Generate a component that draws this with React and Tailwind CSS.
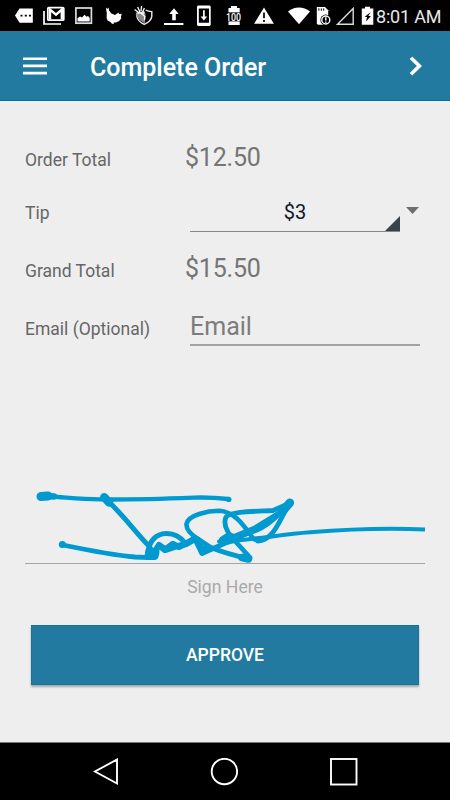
const ROBOTO = "font-['Roboto','Noto_Sans',sans-serif]";

// Every status glyph is drawn in the bar's own coordinate system.
function Slot({ x, w, children }) {
  return (
    <svg width={w} height="31" viewBox={`${x} 0 ${w} 31`} className="block shrink-0" fill="none">
      {children}
    </svg>
  );
}

function StatusBar() {
  return (
    <header className="flex h-[31px] w-full shrink-0 bg-black text-white">
      <Slot x={0} w={38}>
        <path d="M19.5 8.5H32.8V22.7H19.5L15 15.6Z" fill="#fff" />
        <path d="M20.5 15.6h2M24.8 15.6h2M29 15.6h2" stroke="#000" strokeWidth="1.8" />
      </Slot>
      <Slot x={38} w={32}>
        <rect x="47.8" y="7.6" width="16" height="12.6" rx="1" stroke="#fff" strokeWidth="1.7" />
        <path d="M50 19.5V9.6L56 14.6L61.8 9.6V19.5" stroke="#fff" strokeWidth="2.4" />
        <path d="M44 11V24H61" stroke="#fff" strokeWidth="1.7" />
      </Slot>
      <Slot x={70} w={28}>
        <rect x="75.9" y="8" width="15.5" height="15.2" stroke="#ddd" strokeWidth="1.7" />
        <path d="M77.5 21.6V18.2L80 16.4L82 17.6L84.5 14.8L86.5 16.8L88 16L89.7 18V21.6Z" fill="#fff" />
      </Slot>
      <Slot x={98} w={30}>
        <path d="M105.8 7.4L107.2 9L108.6 7.6L109 10.4L111.4 13.6L115 15L118.6 12.4L119 14L121.8 13.8L121 16.4L121.2 18.6L119.2 21L116 22.4L113.6 22.6L113.8 24.2L111.6 23.4L110.8 22.2L107.6 20.6L106.6 18L106.8 13Z" fill="#fff" />
      </Slot>
      <Slot x={128} w={31}>
        <path d="M137 12.4V17C137.6 20.4 140.6 22.6 144.2 24.4C148.4 22.6 151.4 19.6 151.8 16.4V11.6C149.4 11.6 147.4 11.2 145.6 10" stroke="#eee" strokeWidth="1.4" />
        <path d="M137.4 12.4L144 10.6L145.6 14L145 23.4C140.6 21.4 138 19.6 137.4 16.6Z" fill="#888" />
        <path d="M134.6 9.4L138.6 12.4M137.6 7L140 12M141.6 6L141 11M144.4 8L142.6 12M137.4 13H144.4M140.4 12.4L144.8 16.4L144.4 20" stroke="#fff" strokeWidth="1.3" />
      </Slot>
      <Slot x={159} w={31}>
        <path d="M174 8.2L178.7 14H175.8V20.2H172.2V14H169.2Z" fill="#fff" />
        <path d="M164 24h19.4" stroke="#fff" strokeWidth="2" />
      </Slot>
      <Slot x={190} w={28}>
        <path fillRule="evenodd" d="M198 5.4H209.6L210.7 6.5V25L209.6 26H198L197 25V6.5ZM198.8 8.6V22.8H209V8.6Z" fill="#fff" />
        <path d="M203.9 10.3V18" stroke="#fff" strokeWidth="1.7" />
        <path d="M200.6 16.5H207.2L203.9 20.5Z" fill="#fff" />
      </Slot>
      <Slot x={218} w={30}>
        <path d="M231 6H237V8H239.7V25H228.5V8H231Z" fill="#fff" />
        <rect x="226" y="12.4" width="15.7" height="9" fill="#000" />
        <text x="226.1" y="20.8" textLength="15" lengthAdjust="spacingAndGlyphs" fontSize="10.8" fontWeight="500" fontFamily="Roboto, sans-serif" fill="#fff">100</text>
      </Slot>
      <Slot x={248} w={33}>
        <path d="M264 7.5L273.9 23.8H254.1Z" fill="#fff" />
        <path d="M264 12.6V18.2M264 20v2" stroke="#000" strokeWidth="1.7" />
      </Slot>
      <Slot x={281} w={31}>
        <path d="M288 11.5C294.5 6.2 303.5 6.2 310 11.5L299 24.2Z" fill="#fff" />
      </Slot>
      <Slot x={312} w={21}>
        <path d="M316.8 7H325L328.2 10.2V24.8H318L316.8 23.7Z" fill="#fff" />
        <path d="M318.9 8.4v2.3M321.3 8.4v2.3M323.7 8.4v2.3" stroke="#000" strokeWidth="1" />
        <circle cx="325.8" cy="20" r="5.4" fill="#000" />
        <circle cx="325.8" cy="20" r="4" stroke="#fff" strokeWidth="1.4" />
        <path d="M325.8 17.3V20.5M325.8 21.4V22.7" stroke="#fff" strokeWidth="1.4" />
      </Slot>
      <Slot x={333} w={24}>
        <path d="M353.2 8.4V24.2H337.5Z" stroke="#ddd" strokeWidth="1.4" />
      </Slot>
      <Slot x={357} w={19}>
        <path d="M365 6.7H370V8.4H373.3V24.8H361.8V8.4H365Z" fill="#fff" />
        <path d="M370.6 12L364.6 17H367L366 21.4L371 16H368.3Z" fill="#000" />
      </Slot>
      <span className="shrink-0 whitespace-nowrap text-[18px] leading-[33px] tracking-[-0.2px] text-[#e8e8e8]">8:01 AM</span>
    </header>
  );
}

function Row({ label, className, children }) {
  return (
    <div className={`flex items-baseline pl-[25px] ${className}`}>
      <span className="w-[160px] shrink-0 text-[17.5px] leading-6 text-[#666]">{label}</span>
      {children}
    </div>
  );
}

function Signature() {
  return (
    <svg width="400" height="83" viewBox="25 480 400 83" fill="none" stroke="#0099d0" strokeLinecap="round" strokeLinejoin="round" className="block">
      <path d="M41 496.5L48 496" strokeWidth="9" />
      <path d="M47 496L54 496.4" strokeWidth="6.5" />
      <path d="M47 496.3C66 497.3 78 499 100 499.4C130 499.8 165 498.7 194 497.6C208 497.2 219 498 228 499" strokeWidth="4.4" />
      <path d="M228.6 499.4h.2" strokeWidth="5.4" />
      <path d="M104.3 497.2L109 502.5" strokeWidth="8.5" />
      <path d="M108 501C124 516 137 534 148 545L152 551" strokeWidth="5" />
      <path d="M62.3 544.6h.1" strokeWidth="7" />
      <path d="M63 545C87 550 111 555 135 557L150 557.6" strokeWidth="4.8" />
      <path d="M148 556.6L155 556.5L156 552L148.8 551Z" strokeWidth="7" fill="#0099d0" />
      <path d="M148.5 552C149 541 156 533.8 166 533.5C175 533.2 181 538 184.5 542.5" strokeWidth="5.2" />
      <path d="M153 554L159 545L165 549.5L173 543.8L179 547L195 539" strokeWidth="6" />
      <path d="M160 546L165 550L174 547L186 544L195 538.5" strokeWidth="6.2" />
      <path d="M198 539C192 535 186 530 186.5 524C188 515 208 510.8 219 510.8C235 511.5 244 526 252 537C256 542 260 541.5 266 538" strokeWidth="4.6" />
      <path d="M194 537.5L202 553.5L230 541L251 532C264 529 279 516 288 504" strokeWidth="5" />
      <path d="M198 539L210 547C223 553 235 555 246 558.5L250 557.5L236 542C227 533 223 524 226 517C231 511.5 252 511.5 273 510.5L288 504" strokeWidth="4.8" />
      <path d="M199 543L202 552L207 547" strokeWidth="6.4" />
      <path d="M222 539.5L229 535L238 539L228 541.5Z" strokeWidth="6" fill="#0099d0" />
      <path d="M242 557.5L248.5 559" strokeWidth="7.5" />
      <path d="M222 541L254 528L280 512" strokeWidth="4.4" />
      <path d="M289.8 502.8L283.5 510" strokeWidth="8.6" />
      <path d="M286 510C278 523 273 540 258 541" strokeWidth="4.8" />
      <path d="M219 541.5C246 541 280 534.5 310 532.3C350 529 390 528 427 529.5" strokeWidth="4" />
    </svg>
  );
}

export default function App() {
  return (
    <div className={`flex h-[800px] w-[450px] flex-col overflow-hidden bg-[#eee] ${ROBOTO}`}>
      <StatusBar />
      <nav className="flex h-[70px] shrink-0 items-center border-b border-[#0c6f96] bg-[#237aa0] pl-[23px] text-white">
        <svg width="24" height="18" viewBox="0 0 24 18" fill="none" stroke="#fff" strokeWidth="2.6" className="shrink-0">
          <path d="M0 1.7H24M0 8.9H24M0 16.1H24" />
        </svg>
        <h1 className="ml-[43px] mt-[4px] w-[319px] shrink-0 text-[25px] font-medium leading-8">Complete Order</h1>
        <svg width="14" height="20" viewBox="0 0 14 20" fill="none" stroke="#fff" strokeWidth="3.6" className="shrink-0">
          <path d="M2 1.8L10.4 10L2 18.2" />
        </svg>
      </nav>
      <main className="flex flex-1 flex-col">
        <Row label="Order Total" className="mt-[41px] h-[53px]">
          <span className="text-[25px] leading-8 tracking-[-0.2px] text-[#757575]">$12.50</span>
        </Row>
        <div className="flex h-[58px]">
          <Row label="Tip" className="h-9 w-[400px]">
            <div className="ml-[5px] flex h-[37px] w-[210px] shrink-0 items-baseline justify-center border-b border-[#858a8d] text-[20px] leading-[34px] text-[#101827]">
              <span className="w-full text-center">$3</span>
              <svg width="15" height="15" viewBox="0 0 15 15" className="-ml-[15px] shrink-0 translate-y-[12px]">
                <path d="M15 0V15H0Z" fill="#36434c" />
              </svg>
            </div>
          </Row>
          <svg width="13" height="7" viewBox="0 0 13 7" className="ml-[6px] mt-[12px]">
            <path d="M0 0H13L6.5 7Z" fill="#6e6e6e" />
          </svg>
        </div>
        <Row label="Grand Total" className="h-[55px]">
          <span className="text-[25px] leading-8 tracking-[-0.2px] text-[#757575]">$15.50</span>
        </Row>
        <Row label="Email (Optional)" className="h-[38px]">
          <input aria-label="Email" placeholder="Email" className="ml-[5px] h-[38px] w-[230px] border-b-2 border-[#a3a3a3] bg-transparent p-0 text-[25px] text-[#757575] outline-none placeholder:text-[#7c7c7c]" />
        </Row>
        <section className="mx-[25px] mt-[134px] flex flex-col">
          <Signature />
          <div className="h-px bg-[#a5a5a5]" />
          <p className="mt-[11px] text-center text-[17.6px] leading-6 text-[#aaa]">Sign Here</p>
        </section>
        <button className="mx-[31px] mt-[26px] h-[60px] border border-[#16759b] bg-[#237aa0] text-[17.5px] font-medium text-white shadow-[0_2px_2px_rgba(0,0,0,0.3)]">APPROVE</button>
      </main>
      <footer className="h-[58px] shrink-0 border-t border-[#777] bg-black pl-[93px]">
        <div className="flex h-full items-center">
          <svg width="26" height="28" viewBox="0 0 26 28" fill="none" stroke="#fff" strokeWidth="1.9"><path d="M24 1.5V25.5L2 13.5Z" /></svg>
          <svg width="28" height="28" viewBox="0 0 28 28" fill="none" stroke="#fff" strokeWidth="1.9" className="ml-[91px]"><circle cx="14.4" cy="13.5" r="12.7" /></svg>
          <svg width="28" height="28" viewBox="0 0 28 28" fill="none" stroke="#fff" strokeWidth="1.9" className="ml-[92px]"><rect x="1" y="1" width="25.5" height="25.5" /></svg>
        </div>
      </footer>
    </div>
  );
}
